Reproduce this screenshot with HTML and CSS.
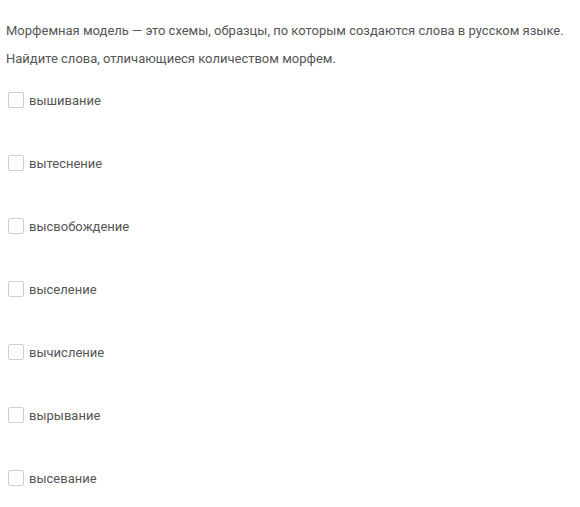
FILE: index.html
```html
<!DOCTYPE html>
<html lang="ru">
<head>
<meta charset="utf-8">
<link rel="stylesheet" href="styles.css">
</head>
<body>
<div class="quiz">
  <p class="q">Морфемная модель — это схемы, образцы, по которым создаются слова в русском языке.</p>
  <p class="q">Найдите слова, отличающиеся количеством морфем.</p>
  <ul class="options">
    <li class="opt"><span class="box"></span><span class="label">вышивание</span></li>
    <li class="opt"><span class="box"></span><span class="label">вытеснение</span></li>
    <li class="opt"><span class="box"></span><span class="label">высвобождение</span></li>
    <li class="opt"><span class="box"></span><span class="label">выселение</span></li>
    <li class="opt"><span class="box"></span><span class="label">вычисление</span></li>
    <li class="opt"><span class="box"></span><span class="label">вырывание</span></li>
    <li class="opt"><span class="box"></span><span class="label">высевание</span></li>
  </ul>
</div>
</body>
</html>
```
FILE: styles.css
```css
html, body {
  margin: 0;
  padding: 0;
  background: #fff;
}
.quiz {
  padding: 17px 6px 0 6px;
  font-family: Roboto, "Liberation Sans", sans-serif;
  font-size: 13px;
  color: #555;
}
.q {
  margin: 0;
  line-height: 28px;
}
.options {
  list-style: none;
  margin: 11px 0 0 0;
  padding: 0;
  display: flex;
  flex-direction: column;
  gap: 31px;
}
.opt {
  display: flex;
  align-items: center;
  height: 32px;
  padding-left: 2px;
}
.box {
  width: 14px;
  height: 14px;
  border: 1px solid #cfcfcf;
  border-radius: 2px;
  background: #fff;
  flex: none;
}
.label {
  margin-left: 5px;
}
```
